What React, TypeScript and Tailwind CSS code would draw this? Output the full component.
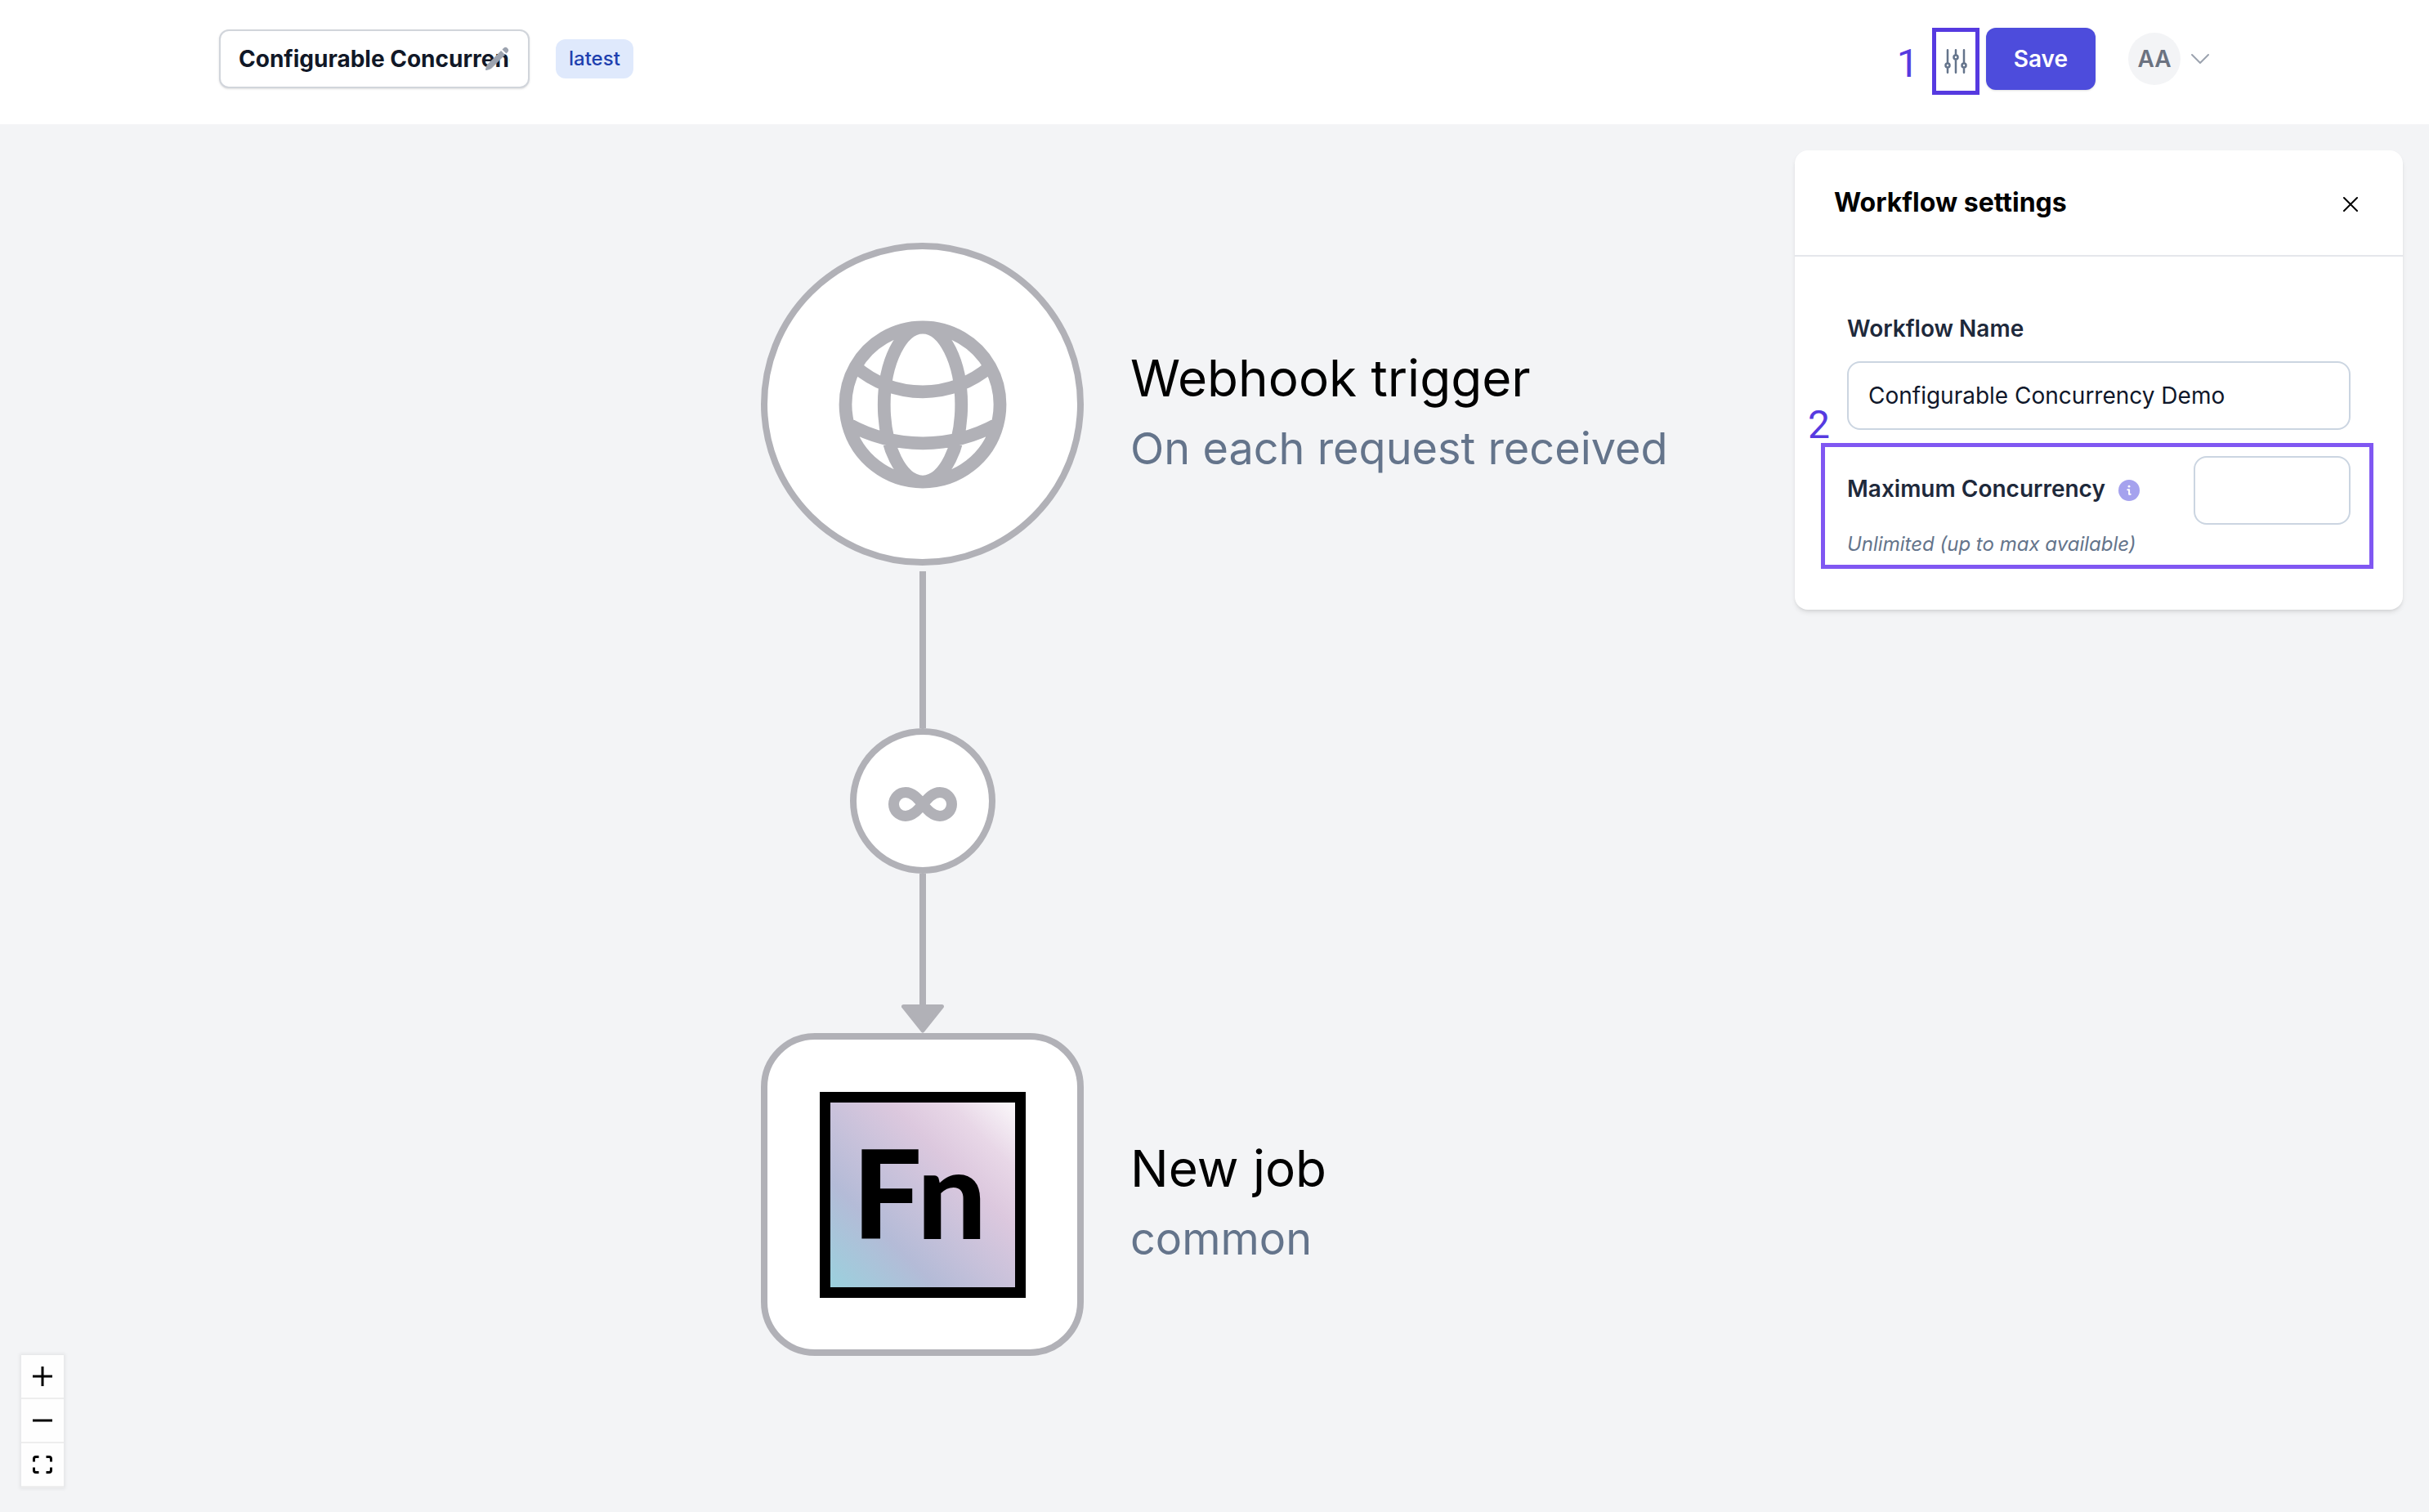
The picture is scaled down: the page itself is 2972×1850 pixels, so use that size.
import React from "react";
import {
  HiOutlineAdjustmentsVertical,
  HiOutlineChevronDown,
  HiOutlineGlobeAlt,
  HiOutlineXMark,
  HiPencil,
} from "react-icons/hi2";

function Header() {
  return (
    <header className="h-[152px] bg-white">
      <div className="mx-auto flex h-36 max-w-[2564px] items-center pr-[60px] pl-16">
        <div className="relative">
          <input
            type="text"
            aria-label="Workflow title"
            defaultValue="Configurable Concurrency Demo"
            className="h-[72px] w-[380px] rounded-xl border-2 border-[#d1d5db] bg-white px-[22px] text-[28px] leading-10 font-bold text-[#111827] shadow-sm"
          />
          <HiPencil className="pointer-events-none absolute top-5 right-6 size-8 text-[#9ca3af]" />
        </div>
        <span className="ml-8 flex h-12 items-center rounded-[12px] bg-[#dfe9fc] px-4 text-[24px] leading-8 font-medium text-[#1e40af]">
          latest
        </span>
        <div className="ml-auto flex items-center">
          <span className="mt-3 mr-4 font-[Roboto] text-[48px] leading-[56px] text-[#563ae0]">1</span>
          <button
            type="button"
            aria-label="Workflow settings"
            className="mt-1.5 mr-2 flex h-[82px] w-[58px] items-center justify-center border-[5px] border-[#563ae0] text-[#64748b]"
          >
            <HiOutlineAdjustmentsVertical className="size-10 shrink-0" />
          </button>
          <button
            type="button"
            className="h-[76px] rounded-xl bg-[#4d4cdc] px-[34px] text-[28px] leading-10 font-semibold text-white shadow-sm"
          >
            Save
          </button>
          <button type="button" aria-label="Account menu" className="ml-10 flex items-center gap-2">
            <span className="flex size-16 items-center justify-center rounded-full bg-[#f3f4f6] text-[28px] leading-10 font-semibold text-[#6b7280]">
              AA
            </span>
            <HiOutlineChevronDown className="size-8 text-[#9ca3af]" />
          </button>
        </div>
      </div>
    </header>
  );
}

function NodeLabel({ title, subtitle }: { title: string; subtitle: string }) {
  return (
    <div className="mt-5 whitespace-nowrap">
      <p className="text-[62px] leading-[88px] text-black">{title}</p>
      <p className="text-[54px] leading-[84px] text-[#64748b]">{subtitle}</p>
    </div>
  );
}

function InfinityIcon() {
  return (
    <svg viewBox="-43 -22 86 44" className="mt-2 h-11 w-[86px]" fill="none" stroke="#b1b1b7" strokeWidth="13">
      <path d="M0 0C6 -7 12 -14.5 21 -14.5A14.5 14.5 0 0 1 21 14.5C12 14.5 6 7 0 0C-6 -7 -12 -14.5 -21 -14.5A14.5 14.5 0 0 0 -21 14.5C-12 14.5 -6 7 0 0Z" />
    </svg>
  );
}

function FnLogo() {
  return (
    <svg viewBox="0 0 252 252" className="size-[252px]" role="img" aria-label="Fn">
      <defs>
        <linearGradient id="fn-fill" x1="0" y1="1" x2="1" y2="0">
          <stop offset="0" stopColor="#98d3de" />
          <stop offset="0.3" stopColor="#b4bbd7" />
          <stop offset="0.65" stopColor="#dcc8de" />
          <stop offset="0.8" stopColor="#e8d7e7" />
          <stop offset="0.98" stopColor="#fbf9fb" />
        </linearGradient>
      </defs>
      <rect x="6.5" y="6.5" width="239" height="239" fill="url(#fn-fill)" stroke="#000" strokeWidth="13" />
      <text x="40" y="180" fontFamily="Lato, sans-serif" fontWeight="900" fontSize="150" fill="#000">
        Fn
      </text>
    </svg>
  );
}

function Diagram() {
  return (
    <section aria-label="Workflow diagram" className="flex flex-col pt-[145px] pl-[931px]">
      <div className="flex items-center gap-[57px]">
        <div className="flex size-[395px] shrink-0 items-center justify-center rounded-full border-8 border-[#b1b1b7] bg-white">
          <HiOutlineGlobeAlt className="size-[252px] text-[#b1b1b7]" />
        </div>
        <NodeLabel title="Webhook trigger" subtitle="On each request received" />
      </div>
      <div className="flex w-[395px] flex-col items-center pt-[7px]">
        <div className="h-48 w-2 bg-[#b1b1b7]" />
        <div className="flex size-[178px] items-center justify-center rounded-full border-8 border-[#b1b1b7] bg-white">
          <InfinityIcon />
        </div>
        <div className="h-40 w-2 bg-[#b1b1b7]" />
        <svg viewBox="0 0 52 35" className="h-[35px] w-[52px]" fill="#b1b1b7" stroke="#b1b1b7" strokeWidth="5" strokeLinejoin="round">
          <path d="M2.5 2.5H49.5L26 32Z" />
        </svg>
      </div>
      <div className="flex items-center gap-[57px]">
        <div className="flex size-[395px] shrink-0 items-center justify-center rounded-[66px] border-8 border-[#b1b1b7] bg-white">
          <FnLogo />
        </div>
        <NodeLabel title="New job" subtitle="common" />
      </div>
    </section>
  );
}

function SettingsPanel() {
  return (
    <aside className="mt-8 mr-8 w-[744px] shrink-0 self-start rounded-2xl bg-white shadow-md">
      <div className="flex h-[130px] items-center justify-between border-b-2 border-[#e5e7eb] px-12">
        <h2 className="text-[32px] leading-10 font-bold text-black">Workflow settings</h2>
        <button type="button" aria-label="Close" className="pt-1">
          <HiOutlineXMark className="size-8 text-black" />
        </button>
      </div>
      <div className="px-16 pt-[68px] pb-16">
        <label htmlFor="workflow-name" className="block text-[28px] leading-10 font-semibold text-[#1e293b]">
          Workflow Name
        </label>
        <input
          id="workflow-name"
          type="text"
          defaultValue="Configurable Concurrency Demo"
          className="mt-5 block h-[84px] w-full rounded-2xl border-2 border-[#cbd5e1] px-6 text-[28px] leading-10 text-[#0f172a]"
        />
        <div className="relative mt-8">
          <div className="flex items-center justify-between">
            <div className="flex items-center gap-4">
              <label htmlFor="max-concurrency" className="pb-1 text-[28px] leading-10 font-semibold text-[#1e293b]">
                Maximum Concurrency
              </label>
              <svg viewBox="0 0 26 26" className="size-[26px]">
                <circle cx="13" cy="13" r="13" fill="#a5a2ee" />
                <circle cx="13" cy="8.2" r="1.4" fill="#fff" />
                <path d="M11.3 12.2h1.8v5.6h1.6" fill="none" stroke="#fff" strokeWidth="2" strokeLinecap="round" strokeLinejoin="round" />
              </svg>
            </div>
            <input
              id="max-concurrency"
              type="text"
              inputMode="numeric"
              className="h-[84px] w-48 rounded-2xl border-2 border-[#cbd5e1] px-6 text-[28px] leading-10 text-[#0f172a]"
            />
          </div>
          <p className="mt-2 text-[24px] leading-8 text-[#64748b] italic">Unlimited (up to max available)</p>
          <div className="pointer-events-none absolute -top-4 -right-7 -bottom-3.5 -left-8 border-[5px] border-[#8057f2]" />
          <span className="absolute -top-[66px] -left-12 font-[Roboto] text-[48px] leading-[56px] text-[#563ae0]">2</span>
        </div>
      </div>
    </aside>
  );
}

const controlIcons = [
  { label: "Zoom in", d: "M12 0V24M0 12H24", width: 3 },
  { label: "Zoom out", d: "M0 12H24", width: 3 },
  { label: "Fit view", d: "M1.5 8.5V5Q1.5 2.5 4 2.5H7.5M16.5 2.5H20Q22.5 2.5 22.5 5V8.5M22.5 15.5V19Q22.5 21.5 20 21.5H16.5M7.5 21.5H4Q1.5 21.5 1.5 19V15.5", width: 3 },
];

function Controls() {
  return (
    <div className="absolute bottom-[30px] left-[26px] flex flex-col shadow-[0_0_4px_2px_rgba(0,0,0,0.06)]">
      {controlIcons.map((icon) => (
        <button
          key={icon.label}
          type="button"
          aria-label={icon.label}
          className="flex h-[54px] w-[52px] items-center justify-center border-b-2 border-[#eeeeee] bg-[#fefefe]"
        >
          <svg viewBox="0 0 24 24" className="size-6" fill="none" stroke="#000" strokeWidth={icon.width}>
            <path d={icon.d} />
          </svg>
        </button>
      ))}
    </div>
  );
}

export default function App() {
  return (
    <div className="flex min-h-screen flex-col bg-[#f3f4f6] font-[Inter,sans-serif]">
      <Header />
      <main className="relative flex flex-1 justify-between">
        <Diagram />
        <SettingsPanel />
        <Controls />
      </main>
    </div>
  );
}
